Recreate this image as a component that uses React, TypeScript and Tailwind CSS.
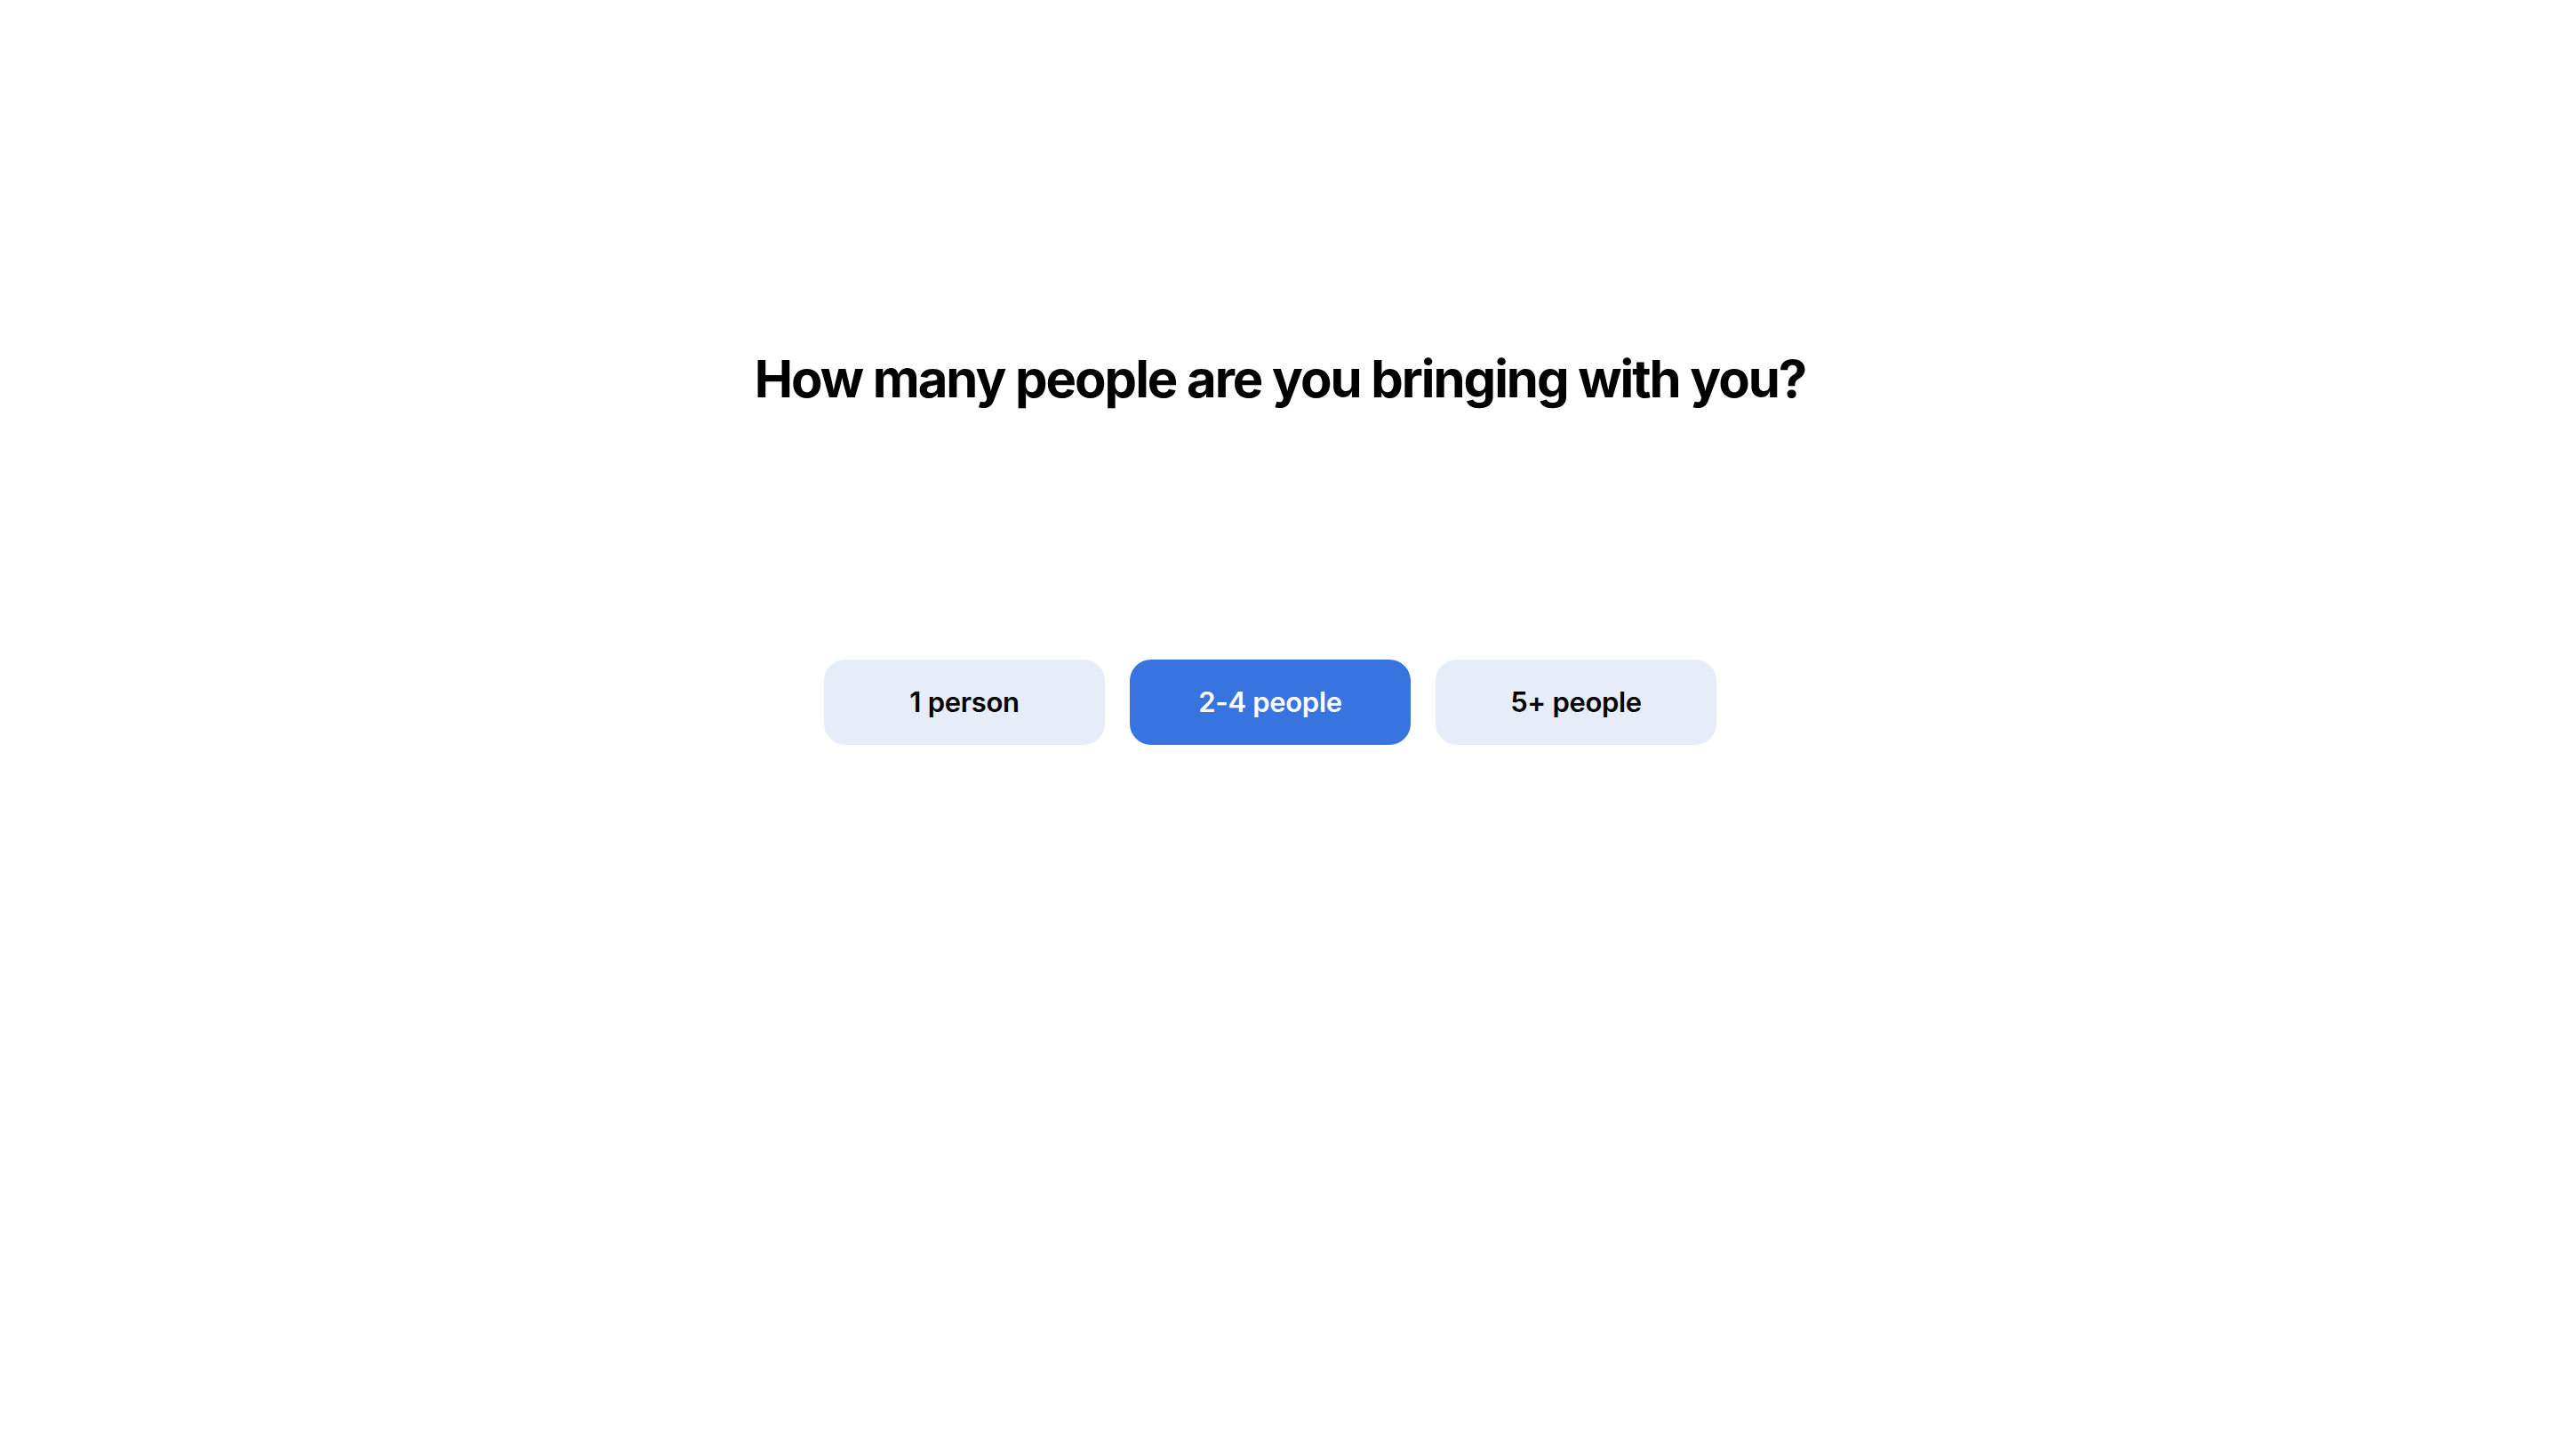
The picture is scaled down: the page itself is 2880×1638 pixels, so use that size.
import React from "react";

export default function App() {
  const options = ["1 person", "2-4 people", "5+ people"];
  const selected = 1;
  return (
    <div
      className="min-h-screen w-full bg-white flex flex-col items-center pt-[380px]"
      style={{ fontFamily: "Inter, 'Noto Sans', sans-serif" }}
    >
      <h1 className="text-[58px] leading-[92px] font-bold tracking-[-0.035em] text-black">
        How many people are you bringing with you?
      </h1>
      <div className="mt-[270px] flex pl-[6px]">
        {options.map((o, i) => (
          <button
            key={o}
            className={
              i === selected
                ? "mr-[28px] w-[316px] h-[96px] rounded-[24px] bg-[#3874e0] text-white text-[31px] font-semibold tracking-[-0.01em]"
                : "mr-[28px] w-[316px] h-[96px] rounded-[24px] bg-[#e7edf8] text-black text-[31px] font-semibold tracking-[-0.01em]"
            }
          >
            {o}
          </button>
        ))}
      </div>
    </div>
  );
}
